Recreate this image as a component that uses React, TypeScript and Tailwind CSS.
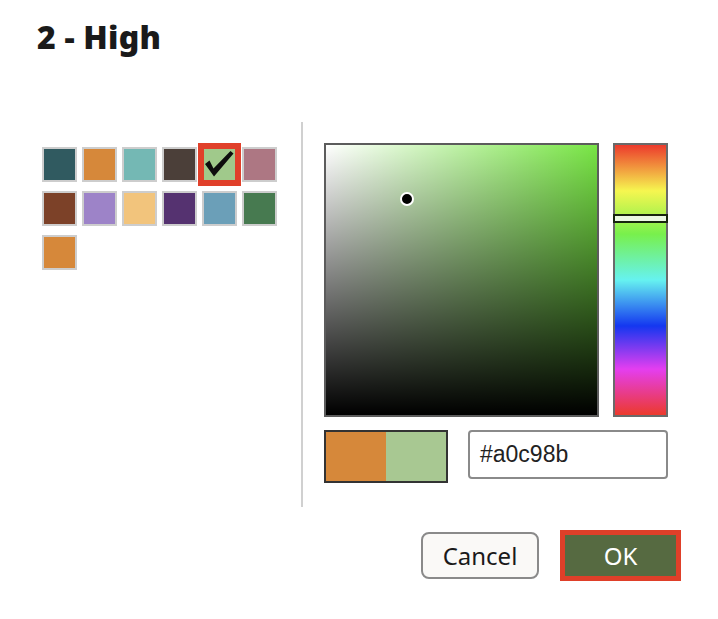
import React from "react";

const swatches = [
  "#305a60",
  "#d6883a",
  "#74b8b4",
  "#4b3f39",
  "#a0c98b",
  "#ad7783",
  "#7c4128",
  "#9d83c8",
  "#f2c47c",
  "#553270",
  "#6b9fb8",
  "#477a50",
  "#d6883a",
];

const SELECTED = 4;

function Swatch({ color, selected }: { color: string; selected: boolean }) {
  return (
    <div
      className={
        selected
          ? "relative w-[35px] h-[35px] border-2 border-[#e0402a] outline-4 outline-[#e0402a]"
          : "w-[35px] h-[35px] border-2 border-[#cdcdcd]"
      }
      style={{ backgroundColor: color }}
    >
      {selected && (
        <svg viewBox="0 0 31 31" className="absolute inset-0 w-full h-full">
          <path d="M1 15 L5.5 11.5 L9.5 19.5 L26.5 2 L29.5 4.5 L10 27.5 Z" fill="#0d0d0d" />
        </svg>
      )}
    </div>
  );
}

export default function App() {
  return (
    <div className="w-[718px] h-[619px] bg-white font-['Noto_Sans',sans-serif] text-[#1a1a1a]">
      <h1 className="pt-[17px] pl-[37px] text-[32px] leading-[40px] font-black tracking-[0.2px]">2 - High</h1>

      <div className="mt-[65px] flex h-[385px]">
        {/* Preset swatches */}
        <div className="w-[301px] pl-[42px] pt-[25px]">
          <div className="grid grid-cols-[repeat(6,35px)] gap-x-[5px] gap-y-[9px]">
            {swatches.map((c, i) => (
              <Swatch key={i} color={c} selected={i === SELECTED} />
            ))}
          </div>
        </div>

        <div className="w-[2px] bg-[#d0d0d0]" />

        {/* Picker */}
        <div className="pl-[21px] pt-[21px] flex flex-col gap-[13px]">
          <div className="flex gap-[14px]">
            <div className="relative w-[275px] h-[274px] border-2 border-[#5c5c5c] bg-[#78e545]">
              <div className="absolute inset-0 bg-linear-to-r from-white to-transparent" />
              <div className="absolute inset-0 bg-linear-to-b from-transparent to-black" />
              <div className="absolute left-[74px] top-[47px] w-[14px] h-[14px] rounded-full border-2 border-white bg-black" />
            </div>
            <div className="relative w-[55px] h-[274px] border-2 border-[#6a6a6a] bg-[linear-gradient(to_bottom,#ec3a2c_0%,#f6f650_17%,#78f04c_33%,#66f2f0_50%,#1437f0_67%,#e43ef0_83%,#ec3a2c_100%)]">
              <div className="absolute left-[-2px] right-[-2px] top-[69px] h-[9px] border-2 border-[#17250f] bg-[#eaf8e2]" />
            </div>
          </div>

          <div className="flex items-start gap-[20px]">
            <div className="flex w-[124px] h-[53px] border-2 border-[#333]">
              <div className="flex-1 bg-[#d6883a]" />
              <div className="flex-1 bg-[#a8c892]" />
            </div>
            <div className="w-[200px] h-[49px] border-2 border-[#8a8a8a] rounded-[4px] pl-[10px] pb-[1px] flex items-center font-['Liberation_Sans',sans-serif] text-[23px] text-[#222]">
              #a0c98b
            </div>
          </div>
        </div>
      </div>

      <div className="mt-[23px] pr-[37px] flex justify-end items-center gap-[21px]">
        <button className="w-[118px] h-[47px] rounded-[8px] border-2 border-[#8a8a8a] bg-[#faf9f7] text-[24px] text-[#1a1a1a]">
          Cancel
        </button>
        <button className="w-[121px] h-[51px] border-[5px] border-[#df3f29] bg-[#566a41] text-[24px] text-white">
          OK
        </button>
      </div>
    </div>
  );
}
